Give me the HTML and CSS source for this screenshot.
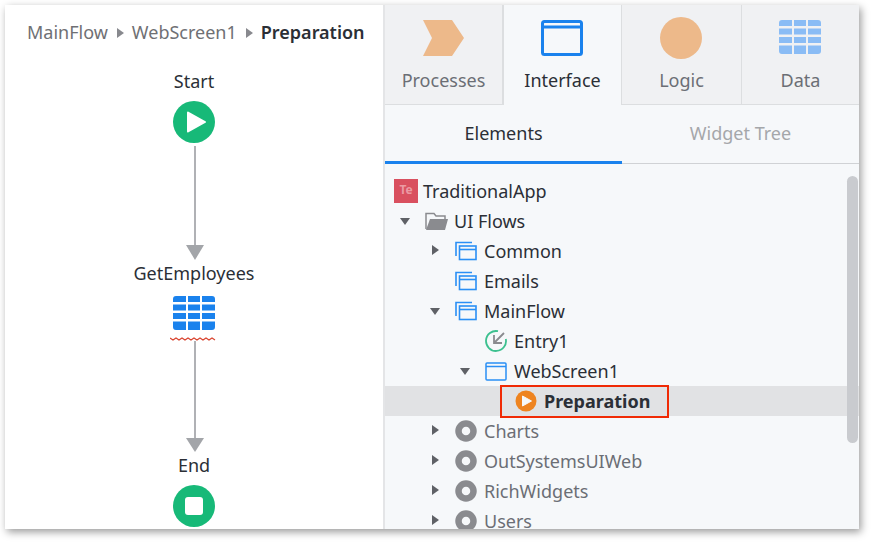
FILE: index.html
```html
<!DOCTYPE html>
<html>
<head>
    <title>Preparation</title>
    <link rel="stylesheet" href="styles.css">
</head>
<body>
<svg class="defs" width="0" height="0">
    <symbol id="flow" viewBox="0 0 22 20">
        <path d="M1 15V1.500H17" fill="none" stroke="#2a8ff5" stroke-width="1.600"/>
        <rect x="4.500" y="5" width="16.500" height="13.500" fill="none" stroke="#2a8ff5" stroke-width="1.600"/>
        <path d="M4 8.500h17" stroke="#2a8ff5" stroke-width="1.600"/>
    </symbol>
    <symbol id="module" viewBox="0 0 22 22">
        <circle cx="11" cy="11" r="7.500" fill="none" stroke="#8a8b8f" stroke-width="6.500"/>
    </symbol>
    <symbol id="grid" viewBox="0 0 42 34">
        <path d="M0 3a3 3 0 0 1 3-3h10v6H0zM15 0h12v6H15zM29 0h10a3 3 0 0 1 3 3v3H29zM0 8.500h13v6H0zM15 8.500h12v6H15zM29 8.500h13v6H29zM0 17h13v6H0zM15 17h12v6H15zM29 17h13v6H29zM0 25.500h13V34H3a3 3 0 0 1-3-3zM15 25.500h12V34H15zM29 25.500h13V31a3 3 0 0 1-3 3H29z"/>
    </symbol>
</svg>
<div class="window">
    <div class="canvas">
        <div class="crumbs">
            <span>MainFlow</span><i class="crumb-arrow"></i>
            <span>WebScreen1</span><i class="crumb-arrow"></i>
            <b>Preparation</b>
        </div>
        <div class="flow">
            <div class="node-label">Start</div>
            <svg class="node-icon" width="42" height="42" viewBox="0 0 42 42">
                <circle cx="21" cy="21" r="21" fill="#17b978"/>
                <path d="M15 11.500 32 21 15 30.500z" fill="#fff" stroke="#fff" stroke-width="2" stroke-linejoin="round"/>
            </svg>
            <div class="line line-first"></div>
            <div class="arrow"></div>
            <div class="node-label">GetEmployees</div>
            <svg class="table-icon" width="42" height="34"><use href="#grid"/></svg>
            <svg class="squiggle" width="48" height="6" viewBox="0 0 48 6">
                <path d="M0 2l3 2 3-2 3 2 3-2 3 2 3-2 3 2 3-2 3 2 3-2 3 2 3-2 3 2 3-2 3 2" fill="none" stroke="#d9432f" stroke-width="1.200"/>
            </svg>
            <div class="line line-second"></div>
            <div class="arrow arrow-end"></div>
            <div class="node-label">End</div>
            <svg class="node-icon" width="42" height="42" viewBox="0 0 42 42">
                <circle cx="21" cy="21" r="21" fill="#17b978"/>
                <rect x="12" y="12" width="18" height="18" rx="3" fill="#fff"/>
            </svg>
        </div>
    </div>

    <div class="side">
        <div class="tabs">
            <div class="tab">
                <svg width="42" height="36" viewBox="0 0 42 36"><path d="M0 0h29l12 18-12 18H0l9-18z" fill="#edb98a"/></svg>
                <span>Processes</span>
            </div>
            <div class="tab active">
                <svg class="tab-nudge" width="42" height="36" viewBox="0 0 42 36">
                    <rect x="1.500" y="1.500" width="39" height="33" rx="2" fill="none" stroke="#1a82ed" stroke-width="3"/>
                    <path d="M1 7h40" stroke="#1a82ed" stroke-width="3"/>
                </svg>
                <span>Interface</span>
            </div>
            <div class="tab">
                <svg class="tab-circle tab-nudge" width="42" height="42" viewBox="0 0 42 42"><circle cx="21" cy="21" r="21" fill="#edb98a"/></svg>
                <span>Logic</span>
            </div>
            <div class="tab">
                <svg class="tab-grid tab-nudge" width="42" height="34"><use href="#grid"/></svg>
                <span>Data</span>
            </div>
        </div>
        <div class="subtabs">
            <div class="subtab current">Elements</div>
            <div class="subtab">Widget Tree</div>
        </div>
        <div class="tree">
            <div class="row">
                <span class="te">Te</span>
                <span>TraditionalApp</span>
            </div>
            <div class="row lvl1">
                <i class="toggle open"></i>
                <svg class="icon folder" width="24" height="20" viewBox="0 0 24 20">
                    <path d="M1 18V2.500h8l2 2.500h9v3" fill="none" stroke="#8a8b8f" stroke-width="1.500"/>
                    <path d="M1 19 5 8h18l-3 11z" fill="#8a8b8f"/>
                </svg>
                <span>UI Flows</span>
            </div>
            <div class="row lvl2">
                <i class="toggle closed"></i>
                <svg class="icon" width="22" height="20"><use href="#flow"/></svg>
                <span>Common</span>
            </div>
            <div class="row lvl2">
                <i class="toggle"></i>
                <svg class="icon" width="22" height="20"><use href="#flow"/></svg>
                <span>Emails</span>
            </div>
            <div class="row lvl2">
                <i class="toggle open"></i>
                <svg class="icon" width="22" height="20"><use href="#flow"/></svg>
                <span>MainFlow</span>
            </div>
            <div class="row lvl3">
                <i class="toggle"></i>
                <svg class="icon" width="22" height="22" viewBox="0 0 22 22">
                    <path d="M13 1.200A10 10 0 1 0 20.800 9" fill="none" stroke="#3cc08f" stroke-width="1.800"/>
                    <path d="M19 3 9 13M9 5v8h8" fill="none" stroke="#8a8b8f" stroke-width="1.800"/>
                </svg>
                <span>Entry1</span>
            </div>
            <div class="row lvl3">
                <i class="toggle open"></i>
                <svg class="icon" width="22" height="19" viewBox="0 0 22 19">
                    <rect x="1" y="1" width="20" height="17" rx="1" fill="none" stroke="#2a8ff5" stroke-width="1.500"/>
                    <path d="M1 4.500h20" stroke="#2a8ff5" stroke-width="1.500"/>
                </svg>
                <span>WebScreen1</span>
            </div>
            <div class="row lvl4 selected">
                <i class="toggle"></i>
                <span class="marked">
                    <svg class="icon" width="22" height="22" viewBox="0 0 22 22">
                        <circle cx="11" cy="11" r="10.500" fill="#ee8420"/>
                        <path d="M7.500 6v10l9-5z" fill="#f6f8fa" stroke="#f6f8fa" stroke-linejoin="round"/>
                    </svg>
                    <b>Preparation</b>
                </span>
            </div>
            <div class="row lvl2 dim">
                <i class="toggle closed"></i>
                <svg class="icon" width="22" height="22"><use href="#module"/></svg>
                <span>Charts</span>
            </div>
            <div class="row lvl2 dim">
                <i class="toggle closed"></i>
                <svg class="icon" width="22" height="22"><use href="#module"/></svg>
                <span>OutSystemsUIWeb</span>
            </div>
            <div class="row lvl2 dim">
                <i class="toggle closed"></i>
                <svg class="icon" width="22" height="22"><use href="#module"/></svg>
                <span>RichWidgets</span>
            </div>
            <div class="row lvl2 dim">
                <i class="toggle closed"></i>
                <svg class="icon" width="22" height="22"><use href="#module"/></svg>
                <span>Users</span>
            </div>
            <div class="scrollbar"></div>
        </div>
    </div>
</div>
</body>
</html>
```

FILE: styles.css
```css
body {
    margin: 0;
    height: 544px;
    background-color: #fff;
    font-family: "Noto Sans", sans-serif;
    font-size: 18px;
    color: #2b2f36;
    overflow: hidden;
}

.defs {
    position: absolute;
}

.window {
    display: flex;
    width: 854px;
    height: 524px;
    margin: 5px 0 0 5px;
    background-color: #fff;
    box-shadow: 2px 3px 8px rgba(0, 0, 0, 0.4);
    overflow: hidden;
}

/* left: flow canvas */
.canvas {
    width: 378px;
    flex: none;
    border-right: 2px solid #e4e5e7;
    overflow: hidden;
}

.crumbs {
    display: flex;
    align-items: center;
    height: 26px;
    padding: 14px 0 0 22px;
    color: #6f7074;
}

.crumbs b {
    color: #2b2f36;
    font-weight: 600;
}

.crumb-arrow {
    width: 0;
    height: 0;
    margin: 1px 8px 0 9px;
    border-left: 7px solid #88898e;
    border-top: 5.500px solid transparent;
    border-bottom: 5.500px solid transparent;
}

.flow {
    display: flex;
    flex-direction: column;
    align-items: center;
    width: 378px;
    padding-top: 23px;
}

.node-label {
    height: 26px;
    line-height: 26px;
}

.node-icon {
    flex: none;
    margin-top: 7px;
}

.line {
    width: 2px;
    margin-left: 2px;
    background-color: #b0b1b5;
}

.line-first {
    height: 99px;
    margin-top: 3px;
}

.line-second {
    height: 97px;
    margin-top: -1px;
}

.arrow {
    width: 0;
    height: 0;
    margin-left: 2px;
    border-left: 9px solid transparent;
    border-right: 9px solid transparent;
    border-top: 15px solid #a3a5a9;
}

.arrow-end {
    border-top-width: 14px;
}

.table-icon {
    flex: none;
    margin-top: 10px;
    fill: #1a82ed;
}

.squiggle {
    flex: none;
    margin-top: 6px;
}

/* right: side panel */
.side {
    flex: 1;
    display: flex;
    flex-direction: column;
    min-width: 0;
    background-color: #f6f8fa;
    color: #2b2f36;
}

.tabs {
    display: flex;
    height: 100px;
    flex: none;
}

.tab {
    width: 118px;
    box-sizing: border-box;
    display: flex;
    flex-direction: column;
    align-items: center;
    padding-top: 15px;
    background-color: #f0f1f3;
    border-bottom: 1px solid #dcdee0;
    border-right: 1px solid #dcdee0;
    color: #6b6e75;
}

.tab:nth-child(3) {
    width: 120px;
}

.tab:nth-child(4) {
    width: 117px;
    border-right: 0;
}

.tab span {
    margin-top: 1px;
    line-height: 46px;
    height: 44px;
}

.tab.active {
    width: 119px;
    background-color: #f6f8fa;
    border-bottom: 0;
    border-left: 1px solid #dcdee0;
    color: #2b2f36;
}

.tab-nudge {
    margin-right: 2px;
}

.tab-circle {
    margin-top: -3px;
    margin-bottom: -3px;
}

.tab-grid {
    fill: #8abcf5;
    margin-bottom: 2px;
}

.subtabs {
    display: flex;
    height: 59px;
    flex: none;
    border-bottom: 1px solid #d0d2d5;
    box-sizing: border-box;
}

.subtab {
    flex: 1;
    text-align: center;
    line-height: 57px;
    color: #a5a7aa;
}

.subtab.current {
    color: #2b2f36;
    box-shadow: inset 0 -3px 0 #1a82ed;
    height: 59px;
}

.tree {
    position: relative;
    flex: 1;
    padding-top: 12px;
    overflow: hidden;
}

.row {
    display: flex;
    align-items: center;
    height: 30px;
    padding-left: 9px;
    white-space: nowrap;
}

.lvl1 { padding-left: 9px; }
.lvl2 { padding-left: 39px; }
.lvl3 { padding-left: 69px; }
.lvl4 { padding-left: 99px; }

.toggle {
    width: 31px;
    height: 0;
    flex: none;
    position: relative;
}

.toggle.open::before,
.toggle.closed::before {
    content: "";
    position: absolute;
    width: 0;
    height: 0;
}

.toggle.open::before {
    left: 6px;
    top: -3px;
    border-left: 5.500px solid transparent;
    border-right: 5.500px solid transparent;
    border-top: 7px solid #5f6166;
}

.toggle.closed::before {
    left: 8px;
    top: -6px;
    border-left: 7px solid #5f6166;
    border-top: 5.500px solid transparent;
    border-bottom: 5.500px solid transparent;
}

.icon {
    flex: none;
    margin-right: 7px;
}

.folder {
    margin-right: 5px;
}

.te {
    width: 24px;
    height: 24px;
    margin-right: 5px;
    background-color: #d9505f;
    color: #eb9aa3;
    font-size: 12px;
    font-weight: 700;
    line-height: 22px;
    text-align: center;
}

.selected {
    background-color: #e1e2e4;
}

.selected b {
    font-weight: 700;
}

.marked {
    position: relative;
    display: flex;
    align-items: center;
    height: 24px;
}

/* red highlight drawn over the row */
.marked::after {
    content: "";
    position: absolute;
    left: -15px;
    top: -4px;
    right: -19px;
    bottom: -5px;
    border: 2px solid #f02a05;
}

.dim {
    color: #6b6e75;
}

.scrollbar {
    position: absolute;
    right: 1px;
    top: 12px;
    width: 11px;
    height: 267px;
    border-radius: 6px;
    background-color: #c9cbcf;
}
```
